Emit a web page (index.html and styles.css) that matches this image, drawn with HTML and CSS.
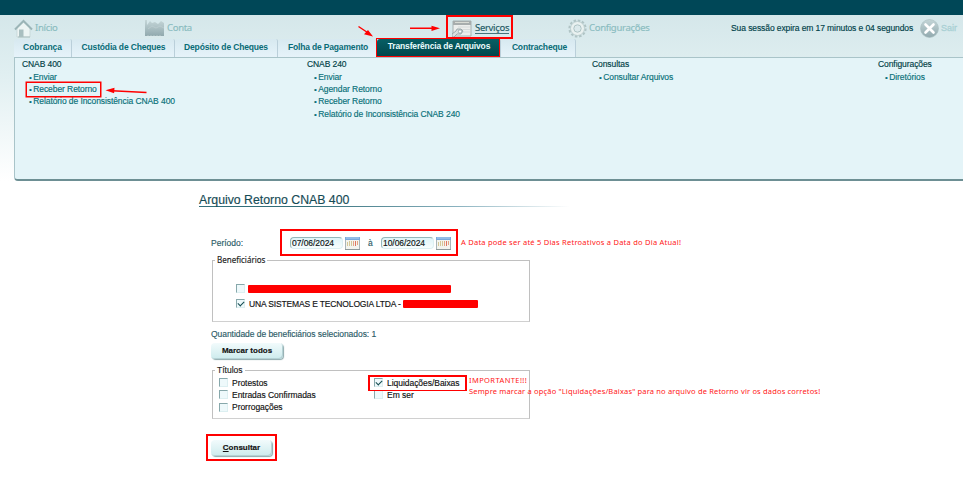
FILE: index.html
```
<!DOCTYPE html>
<html lang="pt-BR">
<head>
<meta charset="utf-8">
<title>Arquivo Retorno CNAB 400</title>
<link rel="stylesheet" href="styles.css">
</head>
<body>
<svg class="defs" width="0" height="0">
  <defs>
    <linearGradient id="grey" x1="0" y1="0" x2="0" y2="1"><stop offset="0" stop-color="#c5d6d8"/><stop offset="1" stop-color="#91a9ae"/></linearGradient>
    <symbol id="calendar" viewBox="0 0 15 13">
      <rect x=".5" y=".5" width="14" height="12" fill="#f3f4ee" stroke="#a9b5b7"/>
      <path d="M0 0h15v3H0z" fill="#79a8dc"/><path d="M1 1h13" stroke="#b0d0f1"/>
      <path d="M2.500 5v4M4.500 4v5M6.500 4v5" stroke="#d5c898"/><path d="M8.500 4v5M12.500 4v4" stroke="#e5a582"/><path d="M10.500 4v5" stroke="#df7661"/>
      <path d="M0 12.500h15" stroke="#8e9a9b"/>
    </symbol>
  </defs>
</svg>
<div class="topbar"></div>
<header class="header">
  <nav class="nav">
    <a class="nav-item home"><svg width="19" height="19" viewBox="0 0 19 19"><path d="M3 9v9h13V9L9.500 3z" fill="#edf5f4" stroke="#c1d2d2" stroke-width=".7"/><path d="M1 10.500l8.500-8.500 8.500 8.500" fill="none" stroke="#9bb5b7" stroke-width="2"/><path d="M5 10.500h4.500V18H5z" fill="#a9bfc0"/><path d="M4 18h12" stroke="#adc1c1"/></svg><span>Início</span></a>
    <a class="nav-item account"><svg width="21" height="19" viewBox="0 0 21 19"><path d="M1 1h2v5l3-4 2 2 3-1 3 2 3-3 3 2v13H1z" fill="url(#grey)"/><path d="M4 18.500v-2M7 18.500v-2M10 18.500v-2M13 18.500v-2M16 18.500v-2" stroke="#dce8e8"/><path d="M4 10l4-3 4 2 4-2 4 2" stroke="#c0d0d2" fill="none" stroke-width=".7"/></svg><span>Conta</span></a>
    <a class="nav-item services"><svg width="20" height="17" viewBox="0 0 20 17"><path d="M1 1h18v15H1z" fill="#eceeec" stroke="#a5b0b1"/><path d="M1 1h18v4H1z" fill="#a7adad"/><path d="M3 2.500h14" stroke="#d8dbd4"/><path d="M6 7h12M6 9.500h12M9 12h9" stroke="#d5dada"/><path d="M0 14l4-3 1-2h4l2 2-2 3H5l-3 3H0z" fill="#dce1e0" stroke="#8b9b9e" stroke-width=".8"/><circle cx="8" cy="11.500" r="1.700" fill="#fff" stroke="#80979a" stroke-width=".7"/></svg><span>Serviços</span></a>
    <a class="nav-item settings"><svg width="19" height="19" viewBox="0 0 19 19"><circle cx="9.500" cy="9.500" r="8" fill="none" stroke="#b0c4c5" stroke-width="2.200" stroke-dasharray="2.500 1.689"/><circle cx="9.500" cy="9.500" r="7" fill="#e9f1f0" stroke="#b5c8c9" stroke-width=".8"/><circle cx="9.500" cy="9.500" r="3.700" fill="#dbe9eb" stroke="#a9c0c1" stroke-width=".9"/></svg><span>Configurações</span></a>
    <span class="session"><span>Sua sessão expira em 17 minutos e 04 segundos</span></span>
    <a class="nav-item exit"><svg width="19" height="19" viewBox="0 0 19 19"><circle cx="9.500" cy="9.500" r="9" fill="url(#grey)" stroke="#a9bec0" stroke-width=".6"/><path d="M5.500 5.500l8 8M13.500 5.500l-8 8" stroke="#fff" stroke-width="2.600" stroke-linecap="round"/></svg><span>Sair</span></a>
  </nav>
  <div class="tabs">
    <a class="tab t1"><span>Cobrança</span></a><a class="tab t2"><span>Custódia de Cheques</span></a><a class="tab t3"><span>Depósito de Cheques</span></a><a class="tab t4"><span>Folha de Pagamento</span></a><a class="tab t5 active"><span>Transferência de Arquivos</span></a><a class="tab t6"><span>Contracheque</span></a>
  </div>
  <section class="panel">
    <div><h2>CNAB 400</h2><ul><li>Enviar</li><li>Receber Retorno</li><li>Relatório de Inconsistência CNAB 400</li></ul></div>
    <div><h2>CNAB 240</h2><ul><li>Enviar</li><li>Agendar Retorno</li><li>Receber Retorno</li><li>Relatório de Inconsistência CNAB 240</li></ul></div>
    <div><h2>Consultas</h2><ul><li>Consultar Arquivos</li></ul></div>
    <div><h2>Configurações</h2><ul><li>Diretórios</li></ul></div>
  </section>
</header>
<main class="content">
  <h1><span>Arquivo Retorno CNAB 400</span></h1>
  <div class="form">
    <div class="period"><span class="label">Período:</span><span class="date">07/06/2024</span><svg class="cal" width="15" height="13"><use href="#calendar"/></svg><span class="to">à</span><span class="date">10/06/2024</span><svg class="cal" width="15" height="13"><use href="#calendar"/></svg></div>
    <section class="group beneficiaries">
      <h3>Beneficiários</h3>
      <div class="option"><i class="check"></i><span class="redact long"></span></div>
      <div class="option"><i class="check on"></i><span class="company">UNA SISTEMAS E TECNOLOGIA LTDA -</span><span class="redact short"></span></div>
    </section>
    <p class="count">Quantidade de beneficiários selecionados: 1</p>
    <button class="btn all">Marcar todos</button>
    <section class="group titles">
      <h3>Títulos</h3>
      <div class="grid">
        <div class="option"><i class="check"></i><span>Protestos</span></div><div class="option"><i class="check on"></i><span>Liquidações/Baixas</span></div>
        <div class="option"><i class="check"></i><span>Entradas Confirmadas</span></div><div class="option"><i class="check"></i><span>Em ser</span></div>
        <div class="option"><i class="check"></i><span>Prorrogações</span></div>
      </div>
    </section>
    <button class="btn submit"><u>C</u>onsultar</button>
  </div>
</main>
<div class="mark m-services"></div>
<div class="mark m-tab"></div>
<div class="mark m-receive"></div>
<div class="mark m-period"></div>
<div class="mark m-paid"></div>
<div class="mark m-submit"></div>
<svg class="arrows" width="963" height="120" viewBox="0 0 963 120">
  <g stroke="red" stroke-width="1.500" fill="none"><path d="M358.500 26.500L369 33.500M410 28.300h23M146.500 92.500L112 90.700"/></g>
  <path d="M373 36.500l-9-2.300 4-4.200zM440 28.300l-8.500-2.600v5.200zM105.500 90.200l9-2.400-.4 5.500z" fill="red"/>
</svg>
<p class="note n-date">A Data pode ser até 5 Dias Retroativos a Data do Dia Atual!</p>
<p class="note n-important">IMPORTANTE!!!</p>
<p class="note n-always">Sempre marcar a opção "Liquidações/Baixas" para no arquivo de Retorno vir os dados corretos!</p>
</body>
</html>
```
FILE: styles.css
```
* { box-sizing: border-box; }
body { margin: 0; width: 963px; height: 493px; overflow: hidden; position: relative; background: #fff; font: 8.5px/12px "Liberation Sans", Arial, sans-serif; color: #004048; white-space: nowrap; -webkit-text-stroke: .15px; }
h1, h2, h3, p, ul { margin: 0; padding: 0; font-weight: normal; }
.defs { position: absolute; }
.topbar { height: 15px; background: #004757; }
.header { height: 166px; padding-left: 14px; background: linear-gradient(#d5e7ea, #e0eff1 35%, #fff); }
.nav { height: 24px; display: grid; grid-template-columns: 130px 308px 116px 163px 189px 43px; align-items: center; padding-top: 2px; }
.nav-item { display: flex; align-items: center; gap: 2px; font: 9.5px/14px "Noto Sans", sans-serif; letter-spacing: -.3px; color: #8abcc0; }
.nav-item svg { flex: none; }
.nav-item.services { color: #1d5964; gap: 3px; }
.services span { border-bottom: 1px solid #47747b; line-height: 11px; }
.exit { font: 9px/14px "Liberation Sans", sans-serif; -webkit-text-stroke: .3px; color: #a9d0d4; gap: 2px; letter-spacing: 0; }
.session { letter-spacing: -.09px; }
.tabs { height: 18px; display: flex; }
.tab { height: 18px; font: bold 8.5px/17px "Liberation Sans", sans-serif; letter-spacing: -.16px; -webkit-text-stroke: 0; color: #086b76; text-align: center; background: linear-gradient(#d7e9f0, #e6f3fa); border-right: 1px solid #bacfda; border-radius: 3px 2px 0 0; }
.t1 { width: 58px; letter-spacing: -.05px; } .t2 { width: 103px; padding-left: 1px; } .t3 { width: 103px; } .t4 { width: 99px; padding-left: 2px; } .t5 { width: 124px; padding-left: 1px; } .t6 { width: 75px; padding-left: 3px; }
.tab.active { color: #e9fbfc; background: linear-gradient(#075f65, #004449); line-height: 15px; }
.panel { height: 124px; border: 1px solid #a9c4c9; border-right: 0; border-bottom: 2px solid #6d8f94; border-radius: 0 0 0 4px; background: #e4f4f8; display: grid; grid-template-columns: 285px 285px 286px 90px; padding: 0 0 0 7px; letter-spacing: -.08px; }
.panel h2 { font-size: 8.5px; line-height: 12px; color: #003e45; }
.panel ul { list-style: none; padding: 1px 0 0 7px; }
.panel li { height: 12.2px; line-height: 12.2px; color: #087078; }
.panel li::before { content: "•"; margin-right: 1.5px; font-size: 8px; line-height: 1; }
.content { padding: 11px 0 0 199px; }
h1 { width: 370px; height: 15px; font-size: 12.3px; line-height: 16px; color: #164b55; border-bottom: 1px solid; border-image: linear-gradient(90deg, #326e79 30%, #8bb3c0 70%, transparent) 1; }
.form { padding: 29px 0 0 12px; }
.period { height: 14px; display: flex; align-items: center; color: #2b5b67; }
.period .label { width: 79px; }
.date { width: 53px; height: 12px; padding-left: 1px; line-height: 12px; color: #101515; letter-spacing: -.05px; border: 1px solid #94b7bb; border-right-color: #dcf0f2; border-bottom-color: #dcf0f2; border-radius: 4px; background: linear-gradient(#dff4f8, #f7fdfd); display: flex; align-items: center; }
.cal { margin-left: 2px; }
.to { width: 21px; padding-left: 8px; }
.group { width: 318px; margin-left: 1px; border: 1px solid #c0c0c0; border-bottom-color: #d0d0d0; }
.group h3 { width: max-content; background: #fff; padding: 0 2px; margin: -6px 0 0 2px; font: 8px/10px "Noto Sans", sans-serif; color: #222; }
.beneficiaries { height: 62px; margin-top: 10px; }
.option { display: flex; align-items: center; color: #111; height: 12px; }
.beneficiaries .option { padding-left: 23px; height: 15px; }
.beneficiaries h3 + .option { margin-top: 16px; }
.check { width: 9px; height: 9px; flex: none; border: 1px solid #dceff1; border-top-color: #87a8ab; border-left-color: #87a8ab; background: #eef9fb; display: grid; place-items: center; }
.check.on::after { content: ""; width: 5px; height: 3px; border-left: 1.5px solid #144b50; border-bottom: 1.5px solid #144b50; transform: translateY(-1px) rotate(-45deg); }
.redact { height: 8px; background: red; border-radius: 1px; }
.redact.long { width: 203px; margin-left: 3px; }
.redact.short { width: 75px; }
.company { width: 154px; margin-left: 4px; letter-spacing: -.15px; }
.count { margin-top: 6px; line-height: 12px; color: #2b5b67; letter-spacing: -.05px; }
.btn { display: block; height: 16px; padding: 0; border: 0; border-radius: 4px; background: linear-gradient(#f2fbfc, #cdebed); box-shadow: inset -1px -1px #b5d2d5, 1px 1px 1px #8eaaad; font: bold 8px/14px "Liberation Sans", sans-serif; color: #111; }
.all { width: 72px; margin-top: 3px; }
.submit { width: 61px; margin-top: 21px; }
.titles { height: 49px; margin-top: 11px; }
.titles h3 { font: 8.5px/10px "Liberation Sans", sans-serif; }
.grid { display: grid; grid-template-columns: 155px 150px; grid-auto-rows: 12.3px; padding: 1.5px 0 0 6px; letter-spacing: -.04px; }
.grid .option span { margin-left: 4px; }
.mark { position: absolute; border: 2px solid red; }
.m-services { left: 446px; top: 15px; width: 67px; height: 24px; }
.m-tab { left: 376px; top: 38px; width: 124px; height: 19px; border-width: 1px; }
.m-receive { left: 26px; top: 82px; width: 75px; height: 15px; border-width: 1px; box-shadow: 0 0 0 .5px red; }
.m-period { left: 280px; top: 229px; width: 178px; height: 27px; }
.m-paid { left: 368px; top: 375px; width: 99px; height: 16px; border-bottom-width: 1px; }
.m-submit { left: 206px; top: 434px; width: 71px; height: 27px; }
.arrows { position: absolute; left: 0; top: 0; }
.note { position: absolute; font: 7.5px/10px "Noto Sans", sans-serif; letter-spacing: .24px; color: #ff1616; -webkit-text-stroke: 0; }
.n-date { left: 461px; top: 237px; }
.n-important { left: 469px; top: 375px; letter-spacing: .4px; }
.n-always { left: 469px; top: 386px; letter-spacing: .17px; }
```
